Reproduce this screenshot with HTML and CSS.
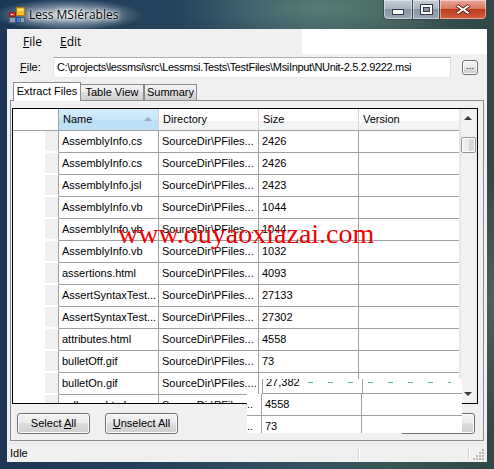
FILE: index.html
```html
<!DOCTYPE html>
<html>
<head>
<meta charset="utf-8">
<link rel="stylesheet" href="styles.css">
</head>
<body>
<div class="window">
  <div class="titlebar">
    <svg class="app-icon" width="16" height="16" viewBox="0 0 16 16">
      <rect x="7.5" y="0.5" width="8" height="8" fill="#f6c22a" stroke="#b07a10"/>
      <rect x="9" y="2" width="5" height="2" fill="#fde98a"/>
      <rect x="0.5" y="5.5" width="6" height="4" fill="#d83a2a" stroke="#8a1f16"/>
      <rect x="2" y="7" width="2" height="1" fill="#f5f5f5"/>
      <rect x="0.5" y="10.5" width="6" height="5" fill="#8fa0b4" stroke="#4e5f73"/>
      <rect x="7.5" y="10.5" width="4" height="5" fill="#3f7fd0" stroke="#1d4f94"/>
      <rect x="11.5" y="10.5" width="4" height="5" fill="#8fa0b4" stroke="#4e5f73"/>
    </svg>
    <span class="title">Less MSIérables</span>
    <div class="caption">
      <div class="cbtn cbtn-min">
        <svg width="12" height="6" viewBox="0 0 12 6"><rect x="0.5" y="0.5" width="11" height="5" fill="#fff" stroke="#333a44"/></svg>
      </div>
      <div class="cbtn cbtn-max">
        <svg width="13" height="11" viewBox="0 0 13 11"><rect x="0.5" y="0.5" width="12" height="10" fill="#fff" stroke="#333a44"/><rect x="3.5" y="3.5" width="6" height="4" fill="#8a96a4" stroke="#333a44"/></svg>
      </div>
      <div class="cbtn cbtn-close">
        <svg width="16" height="13" viewBox="0 0 16 13"><path d="M3 1.5 L8 5 L13 1.5 L15 3.5 L10.5 6.5 L15 9.5 L13 11.5 L8 8 L3 11.5 L1 9.5 L5.5 6.5 L1 3.5 Z" fill="#fff" stroke="#5a1a10" stroke-width="1"/></svg>
      </div>
    </div>
  </div>

  <div class="client">
    <div class="menubar">
      <span class="menu-item"><u>F</u>ile</span>
      <span class="menu-item"><u>E</u>dit</span>
      <div class="menu-blank"></div>
    </div>

    <div class="file-row">
      <span class="file-label"><u>F</u>ile:</span>
      <div class="textbox">C:\projects\lessmsi\src\Lessmsi.Tests\TestFiles\MsiInput\NUnit-2.5.2.9222.msi</div>
      <div class="browse">...</div>
    </div>

    <div class="tabs">
      <div class="tab tab-active">Extract Files</div>
      <div class="tab tab-table">Table View</div>
      <div class="tab tab-summary">Summary</div>
    </div>

    <div class="panel">
      <div class="grid">
        <div class="grid-main">
          <div class="row row-head">
            <div class="cell corner"></div>
            <div class="cell hcell hsorted">Name<span class="sort-arrow"></span></div>
            <div class="cell hcell">Directory</div>
            <div class="cell hcell">Size</div>
            <div class="cell hcell">Version</div>
          </div>
          <div class="row"><div class="cell rh"></div><div class="cell">AssemblyInfo.cs</div><div class="cell">SourceDir\PFiles...</div><div class="cell">2426</div><div class="cell"></div></div>
          <div class="row"><div class="cell rh"></div><div class="cell">AssemblyInfo.cs</div><div class="cell">SourceDir\PFiles...</div><div class="cell">2426</div><div class="cell"></div></div>
          <div class="row"><div class="cell rh"></div><div class="cell">AssemblyInfo.jsl</div><div class="cell">SourceDir\PFiles...</div><div class="cell">2423</div><div class="cell"></div></div>
          <div class="row"><div class="cell rh"></div><div class="cell">AssemblyInfo.vb</div><div class="cell">SourceDir\PFiles...</div><div class="cell">1044</div><div class="cell"></div></div>
          <div class="row"><div class="cell rh"></div><div class="cell">AssemblyInfo.vb</div><div class="cell">SourceDir\PFiles...</div><div class="cell">1044</div><div class="cell"></div></div>
          <div class="row"><div class="cell rh"></div><div class="cell">AssemblyInfo.vb</div><div class="cell">SourceDir\PFiles...</div><div class="cell">1032</div><div class="cell"></div></div>
          <div class="row"><div class="cell rh"></div><div class="cell">assertions.html</div><div class="cell">SourceDir\PFiles...</div><div class="cell">4093</div><div class="cell"></div></div>
          <div class="row"><div class="cell rh"></div><div class="cell">AssertSyntaxTest...</div><div class="cell">SourceDir\PFiles...</div><div class="cell">27133</div><div class="cell"></div></div>
          <div class="row"><div class="cell rh"></div><div class="cell">AssertSyntaxTest...</div><div class="cell">SourceDir\PFiles...</div><div class="cell">27302</div><div class="cell"></div></div>
          <div class="row"><div class="cell rh"></div><div class="cell">attributes.html</div><div class="cell">SourceDir\PFiles...</div><div class="cell">4558</div><div class="cell"></div></div>
          <div class="row"><div class="cell rh"></div><div class="cell">bulletOff.gif</div><div class="cell">SourceDir\PFiles...</div><div class="cell">73</div><div class="cell"></div></div>
          <div class="row"><div class="cell rh"></div><div class="cell">bulletOn.gif</div><div class="cell">SourceDir\PFiles....</div><div class="cell">27382</div><div class="cell"></div></div>
          <div class="row"><div class="cell rh"></div><div class="cell">collapse.html</div><div class="cell">SourceDir\PFiles...</div><div class="cell">4558</div><div class="cell"></div></div>
        </div>
        <div class="vscroll">
          <div class="sb-arrow sb-up"></div>
          <div class="sb-thumb"></div>
          <div class="sb-track"></div>
          <div class="sb-arrow sb-down"></div>
        </div>
      </div>

      <div class="buttons">
        <div class="btn">Select <u>A</u>ll</div>
        <div class="btn btn-unselect"><u>U</u>nselect All</div>
        <div class="btn btn-extract"><u>E</u>xtract</div>
      </div>
    </div>

    <div class="statusbar">
      <span class="status-text">Idle</span>
      <span class="status-sep"></span>
      <span class="status-panel"></span>
      <span class="status-sep"></span>
      <span class="grip">
        <svg width="12" height="12" viewBox="0 0 12 12">
          <g fill="#b8b8b8"><rect x="9" y="1" width="2" height="2"/><rect x="6" y="4" width="2" height="2"/><rect x="9" y="4" width="2" height="2"/><rect x="3" y="7" width="2" height="2"/><rect x="6" y="7" width="2" height="2"/><rect x="9" y="7" width="2" height="2"/><rect x="0" y="10" width="2" height="2"/><rect x="3" y="10" width="2" height="2"/><rect x="6" y="10" width="2" height="2"/><rect x="9" y="10" width="2" height="2"/></g>
        </svg>
      </span>
    </div>
  </div>

  <div class="ghost-top">
    <div class="gcell gsize"><span class="gclip">27,382</span></div>
    <div class="gcell gver"></div>
    <div class="gdash"></div>
  </div>
  <div class="ghost-bottom">
    <div class="grow">
      <div class="gcell gtail">..</div>
      <div class="gcell gsize">4558</div>
      <div class="gcell gver"></div>
    </div>
    <div class="grow">
      <div class="gcell gtail">..</div>
      <div class="gcell gsize">73</div>
      <div class="gcell gver"></div>
    </div>
  </div>

  <div class="watermark">www.ouyaoxiazai.com</div>
</div>
</body>
</html>
```

FILE: styles.css
```css
* { box-sizing: border-box; }

html, body {
  margin: 0;
  padding: 0;
  width: 494px;
  height: 469px;
  overflow: hidden;
}

body {
  font-family: "Liberation Sans", Arial, sans-serif;
  font-size: 11px;
  color: #000;
}

.window {
  position: relative;
  width: 494px;
  height: 469px;
  display: flex;
  flex-direction: column;
  padding: 0 7px 7px 7px;
  background:
    radial-gradient(ellipse 75px 16px at 68px 15px, rgba(215,228,238,0.95), rgba(215,228,238,0) 100%),
    radial-gradient(ellipse 140px 40px at 320px 8px, rgba(120,160,140,0.55), rgba(120,160,140,0) 100%),
    radial-gradient(ellipse 40px 140px at 490px 300px, rgba(90,120,100,0.6), rgba(90,120,100,0) 100%),
    linear-gradient(90deg, #1b3753 0%, #24445e 35%, #34535f 62%, #3a5654 80%, #2e4646 100%);
}

/* ---------- title bar ---------- */
.titlebar {
  height: 29px;
  display: flex;
  align-items: flex-start;
  flex: none;
}

.app-icon {
  margin: 7px 0 0 2px;
  flex: none;
}

.title {
  margin-left: 4px;
  font-family: "Open Sans", "Noto Sans", sans-serif;
  font-size: 12px;
  line-height: 29px;
  color: #000;
  text-shadow: 0 0 6px #fff, 0 0 4px #fff, 0 0 2px #fff;
}

.caption {
  margin-left: auto;
  display: flex;
  height: 20px;
}

.cbtn {
  height: 20px;
  display: flex;
  align-items: center;
  justify-content: center;
  border: 1px solid #3a4550;
  border-top: none;
  box-shadow: inset 0 0 0 1px rgba(255,255,255,0.45);
}

.cbtn-min {
  width: 30px;
  border-radius: 0 0 0 5px;
  background: linear-gradient(#c4ced8 0%, #aab6c2 45%, #8796a4 50%, #9aaab8 100%);
}

.cbtn-min svg { margin-top: 5px; }

.cbtn-max {
  width: 27px;
  border-left: none;
  background: linear-gradient(#c4ced8 0%, #aab6c2 45%, #8796a4 50%, #9aaab8 100%);
}

.cbtn-close {
  width: 47px;
  border-left: none;
  border-radius: 0 0 5px 0;
  background: linear-gradient(#e9a797 0%, #d97a62 45%, #c03a1e 50%, #d2603f 100%);
}

/* ---------- client ---------- */
.client {
  flex: 1;
  background: #f0f0f0;
  display: flex;
  flex-direction: column;
  padding: 0 3px;
  position: relative;
}

.menubar {
  height: 25px;
  display: flex;
  align-items: center;
  margin: 0 -3px;
  padding-left: 16px;
  flex: none;
}

.menu-item {
  font-family: "Open Sans", "Noto Sans", sans-serif;
  font-size: 12px;
  width: 37px;
}

.menu-blank {
  margin-left: auto;
  width: 185px;
  height: 25px;
  background: #fff;
}

.file-row {
  height: 28px;
  display: flex;
  align-items: flex-start;
  flex: none;
}

.file-label {
  width: 43px;
  padding-left: 10px;
  margin-top: 3px;
  line-height: 21px;
}

.textbox {
  margin-top: 3px;
  width: 398px;
  height: 21px;
  background: #fff;
  border: 1px solid #abadb3;
  border-left-color: #e2e3ea;
  border-right-color: #dbdfe6;
  border-bottom-color: #e3e9ef;
  line-height: 19px;
  padding-left: 3px;
  letter-spacing: -0.33px;
  white-space: nowrap;
  overflow: hidden;
}

.browse {
  margin-left: 11px;
  margin-top: 6px;
  width: 16px;
  height: 15px;
  border: 1px solid #707070;
  border-radius: 3px;
  background: linear-gradient(#f2f2f2 0%, #ebebeb 45%, #dddddd 50%, #cfcfcf 100%);
  box-shadow: inset 0 0 0 1px #fcfcfc;
  font-size: 9px;
  line-height: 11px;
  text-align: center;
}

/* ---------- tabs ---------- */
.tabs {
  height: 18px;
  display: flex;
  align-items: flex-end;
  padding-left: 3px;
  flex: none;
  position: relative;
  z-index: 2;
}

.tab {
  height: 16px;
  border: 1px solid #898c95;
  border-bottom: none;
  background: linear-gradient(#f2f2f2 0%, #ebebeb 50%, #dddddd 50%, #cfcfcf 100%);
  text-align: center;
  line-height: 15px;
  white-space: nowrap;
}

.tab-active {
  width: 68px;
  height: 19px;
  margin-bottom: -1px;
  background: #fff;
  line-height: 16px;
}

.tab-table {
  width: 63px;
  border-left: none;
}

.tab-summary {
  width: 53px;
}

/* ---------- panel ---------- */
.panel {
  height: 341px;
  border: 1px solid #898c95;
  background: #f0f0f0;
  padding: 7px 5px 6px 1px;
  display: flex;
  flex-direction: column;
  flex: none;
}

.grid {
  height: 296px;
  border: 1px solid #000;
  display: flex;
  background: #fff;
  flex: none;
}

.grid-main {
  flex: 1;
  overflow: hidden;
}

.row {
  display: grid;
  grid-template-columns: 46px 100px 100px 100px 1fr;
  height: 22px;
}

.cell {
  border-right: 1px solid #a0a0a0;
  border-bottom: 1px solid #a0a0a0;
  padding-left: 3px;
  line-height: 21px;
  white-space: nowrap;
  overflow: hidden;
  background: #fff;
}

.row .cell:last-child { border-right: none; }

.rh {
  background: linear-gradient(90deg, #fff 0 32px, #f0f0f0 32px 45px);
  border-bottom: 1px solid #ffffff;
  box-shadow: inset 7px -1px 0 #fff, inset 0 -1px 0 #e2e2e2;
}

.row-head .cell {
  line-height: 20px;
  padding-left: 4px;
}

.corner {
  background: #fff;
}

.hcell {
  background: linear-gradient(#ffffff 0%, #ffffff 55%, #f3f4f6 55%, #f3f4f6 100%);
  border-right-color: #d5d5d5;
}

.hsorted {
  background: linear-gradient(#d6edfb 0%, #c6e5f8 50%, #bcdff6 50%, #bfe1f7 100%);
  position: relative;
}

.sort-arrow {
  position: absolute;
  right: 6px;
  top: 8px;
  width: 0;
  height: 0;
  border-left: 4px solid transparent;
  border-right: 4px solid transparent;
  border-bottom: 4px solid #a5a8ac;
}

.vscroll {
  width: 18px;
  background: linear-gradient(90deg, #e3e3e3 0%, #f2f2f2 20%, #f2f2f2 80%, #e8e8e8 100%);
  display: flex;
  flex-direction: column;
  align-items: center;
}

.sb-arrow {
  height: 17px;
  width: 100%;
  position: relative;
}

.sb-arrow::after {
  content: "";
  position: absolute;
  left: 5px;
  width: 0;
  height: 0;
  border-left: 4px solid transparent;
  border-right: 4px solid transparent;
}

.sb-up::after {
  top: 7px;
  border-bottom: 4px solid #3c3c3c;
}

.sb-down::after {
  top: 6px;
  border-top: 4px solid #3c3c3c;
}

.sb-thumb {
  margin-top: 11px;
  width: 15px;
  height: 16px;
  border: 1px solid #979797;
  border-radius: 2px;
  background: linear-gradient(90deg, #f2f2f2 0%, #ebebeb 50%, #d6d6d6 51%, #dcdcdc 100%);
  box-shadow: inset 0 0 0 1px #fdfdfd;
}

.sb-track { flex: 1; }

.buttons {
  margin-top: 9px;
  height: 21px;
  display: flex;
  padding-left: 5px;
  flex: none;
}

.btn {
  width: 73px;
  height: 21px;
  border: 1px solid #707070;
  border-radius: 3px;
  background: linear-gradient(#f2f2f2 0%, #ebebeb 45%, #dddddd 50%, #cfcfcf 100%);
  box-shadow: inset 0 0 0 1px #fcfcfc;
  text-align: center;
  line-height: 19px;
}

.btn-unselect { margin-left: 15px; }

.btn-extract {
  margin-left: auto;
  margin-right: 3px;
  width: 75px;
}

/* ---------- status bar ---------- */
.statusbar {
  margin: 2px -3px 0 -3px;
  height: 19px;
  display: flex;
  align-items: center;
  flex: none;
  border-top: 1px solid #e4e4e4;
}

.status-text {
  padding-left: 3px;
  width: 351px;
}

.status-sep {
  width: 1px;
  height: 13px;
  background: #d5d5d5;
  box-shadow: 1px 0 0 #fff;
}

.status-panel { width: 109px; }

.grip {
  margin-left: auto;
  margin-right: 2px;
  align-self: flex-end;
  height: 14px;
}

/* ---------- rendering artefact ---------- */
.ghost-top {
  position: absolute;
  left: 262px;
  top: 379px;
  width: 200px;
  height: 15px;
  display: grid;
  grid-template-columns: 100px 100px;
  background: #fff;
  border-bottom: 1px solid #a0a0a0;
  border-left: 1px solid #a0a0a0;
  overflow: hidden;
}

.gcell {
  border-right: 1px solid #a0a0a0;
  padding-left: 3px;
  white-space: nowrap;
  overflow: hidden;
  background: #fff;
}

.ghost-top .gcell:last-of-type { border-right: none; }

.gclip {
  display: block;
  line-height: 13px;
  margin-top: -3px;
}

.gdash {
  position: absolute;
  left: 45px;
  top: 3px;
  width: 143px;
  height: 1px;
  background: repeating-linear-gradient(90deg, #66bb99 0 5px, transparent 5px 20px);
}

.ghost-bottom {
  position: absolute;
  left: 247px;
  top: 394px;
  width: 215px;
  height: 39px;
  background: #fff;
  overflow: hidden;
}

.grow {
  display: grid;
  grid-template-columns: 15px 100px 100px;
  height: 22px;
  border-bottom: 1px solid #a0a0a0;
}

.grow .gcell {
  line-height: 20px;
}

.gtail {
  padding-left: 0;
}

.grow .gcell:last-child { border-right: none; }

/* ---------- watermark ---------- */
.watermark {
  position: absolute;
  left: 118px;
  top: 218px;
  font-family: "Liberation Serif", "Times New Roman", serif;
  font-size: 28px;
  line-height: 32px;
  color: #f00000;
  white-space: nowrap;
}
```
